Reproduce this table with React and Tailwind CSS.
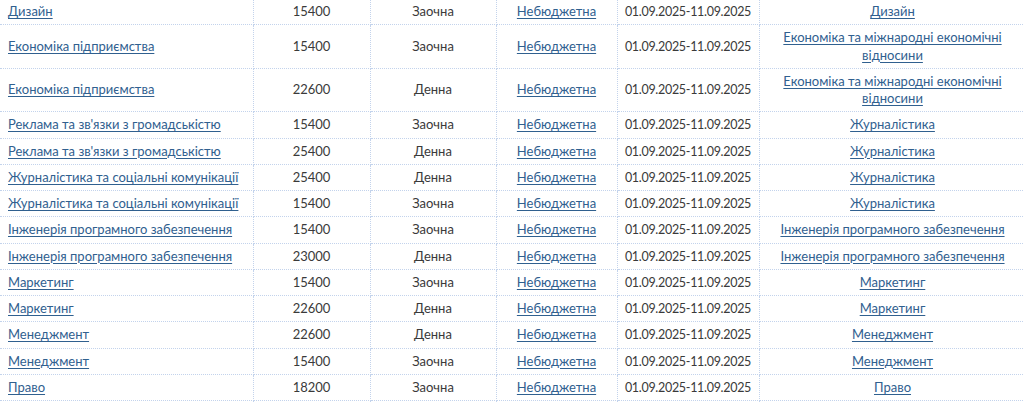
import React from "react";

const rows = [
  ["Дизайн", "15400", "Заочна", "Дизайн"],
  ["Економіка підприємства", "15400", "Заочна", "Економіка та міжнародні економічні відносини"],
  ["Економіка підприємства", "22600", "Денна", "Економіка та міжнародні економічні відносини"],
  ["Реклама та зв'язки з громадськістю", "15400", "Заочна", "Журналістика"],
  ["Реклама та зв'язки з громадськістю", "25400", "Денна", "Журналістика"],
  ["Журналістика та соціальні комунікації", "25400", "Денна", "Журналістика"],
  ["Журналістика та соціальні комунікації", "15400", "Заочна", "Журналістика"],
  ["Інженерія програмного забезпечення", "15400", "Заочна", "Інженерія програмного забезпечення"],
  ["Інженерія програмного забезпечення", "23000", "Денна", "Інженерія програмного забезпечення"],
  ["Маркетинг", "15400", "Заочна", "Маркетинг"],
  ["Маркетинг", "22600", "Денна", "Маркетинг"],
  ["Менеджмент", "22600", "Денна", "Менеджмент"],
  ["Менеджмент", "15400", "Заочна", "Менеджмент"],
  ["Право", "18200", "Заочна", "Право"],
];

const cell =
  "border-b border-r border-dotted border-[#c3d3ec] px-[8px] py-[4px] align-middle";
const link = "text-[#30608f] underline underline-offset-[2px] decoration-[1px]";

export default function App() {
  return (
    <div className="w-[1024px] h-[403px] overflow-hidden bg-white">
      <table
        className="table-fixed border-collapse w-[1026px] -mt-[1px] text-[13px] leading-[17.27px] text-[#3a3a3a]"
        style={{ fontFamily: "Lato, 'Open Sans', sans-serif" }}
      >
        <colgroup>
          <col className="w-[253px]" />
          <col className="w-[117px]" />
          <col className="w-[126px]" />
          <col className="w-[121px]" />
          <col className="w-[142px]" />
          <col className="w-[267px]" />
        </colgroup>
        <tbody>
          {rows.map((r, i) => (
            <tr key={i}>
              <td className={`${cell} text-left`}>
                <a href="#" className={link}>{r[0]}</a>
              </td>
              <td className={`${cell} text-center`}>{r[1]}</td>
              <td className={`${cell} text-center`}>{r[2]}</td>
              <td className={`${cell} text-center`}>
                <a href="#" className={link}>Небюджетна</a>
              </td>
              <td className={`${cell} text-center whitespace-nowrap !px-0 text-[12.5px] tracking-[-0.3px]`}>
                01.09.2025-11.09.2025
              </td>
              <td className={`${cell} text-center`}>
                <a href="#" className={link}>{r[3]}</a>
              </td>
            </tr>
          ))}
          <tr>
            <td className={`${cell} text-left`}>&nbsp;</td>
            <td className={cell}>&nbsp;</td>
            <td className={cell}>&nbsp;</td>
            <td className={cell}>&nbsp;</td>
            <td className={cell}>&nbsp;</td>
            <td className={cell}>&nbsp;</td>
          </tr>
        </tbody>
      </table>
    </div>
  );
}
